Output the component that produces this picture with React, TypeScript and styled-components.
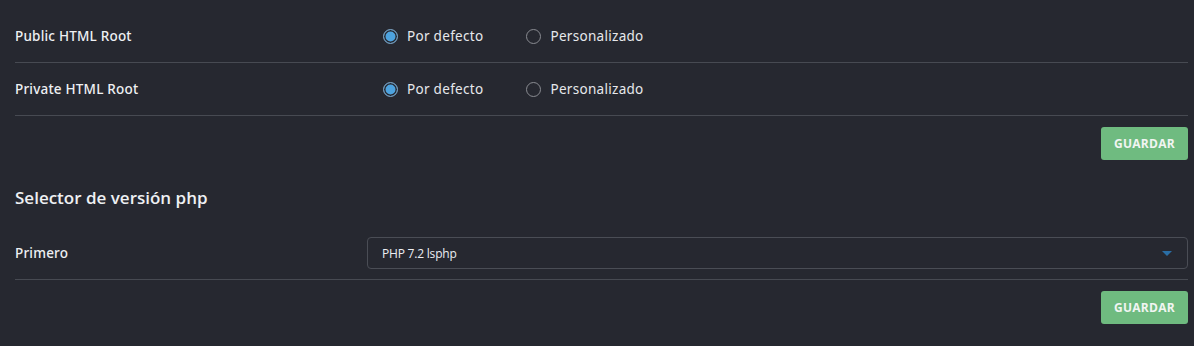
import styled, { createGlobalStyle } from 'styled-components'

const GlobalStyle = createGlobalStyle`
  html, body {
    margin: 0;
    padding: 0;
    background: #262830;
  }
  body {
    font-family: 'Open Sans', 'Liberation Sans', sans-serif;
    color: #eceef2;
  }
`

const Page = styled.div`
  padding: 10px 6px 24px 15px;
  background: #262830;
  min-height: 346px;
  box-sizing: border-box;
`

const Row = styled.div<{ pad?: number }>`
  display: grid;
  grid-template-columns: 352px 1fr;
  align-items: center;
  min-height: 53px;
  padding: ${(p) => p.pad ?? 0}px 0;
  border-bottom: 1px solid #474a52;
  box-sizing: border-box;
`

const Label = styled.div`
  font-family: 'Noto Sans', 'Open Sans', sans-serif;
  font-size: 13.5px;
  font-weight: 500;
  letter-spacing: 0.2px;
  color: #eef0f3;
`

const Options = styled.div`
  display: flex;
  align-items: center;
  gap: 43px;
  padding-left: 16px;
`

const Option = styled.label`
  display: flex;
  align-items: center;
  gap: 9px;
  font-family: 'Noto Sans', 'Open Sans', sans-serif;
  font-size: 13.5px;
  letter-spacing: 0.3px;
  color: #e6e8ec;
  cursor: pointer;
`

const Radio = styled.span<{ checked?: boolean }>`
  width: 15px;
  height: 15px;
  border-radius: 50%;
  box-sizing: border-box;
  border: 1px solid ${(p) => (p.checked ? '#7d9fbb' : '#8a8c92')};
  background: ${(p) => (p.checked ? '#4da3df' : 'transparent')};
  box-shadow: ${(p) => (p.checked ? 'inset 0 0 0 1.5px #262830' : 'none')};
`

const Actions = styled.div`
  display: flex;
  justify-content: flex-end;
  padding-top: 11px;
`

const SaveButton = styled.button`
  width: 87px;
  height: 33px;
  border: none;
  border-radius: 3px;
  background: #6fbb80;
  color: #f1f5f2;
  font-family: 'Open Sans', sans-serif;
  font-weight: 700;
  font-size: 12px;
  letter-spacing: 0.3px;
  cursor: pointer;
`

const Heading = styled.h2`
  margin: 25px 0 16px;
  font-size: 17px;
  line-height: 26px;
  font-weight: 600;
  color: #eef0f3;
`

const Select = styled.div`
  display: flex;
  align-items: center;
  justify-content: space-between;
  height: 32px;
  padding: 0 14px;
  border: 1px solid #4a4d55;
  border-radius: 4px;
  box-sizing: border-box;
  font-size: 12px;
  letter-spacing: -0.2px;
  color: #eceef2;
`

const Caret = styled.span`
  width: 0;
  height: 0;
  border-left: 5px solid transparent;
  border-right: 5px solid transparent;
  border-top: 5px solid #2a6ea5;
  margin-right: 1px;
`

const RadioGroup = ({ value }: { value: string }) => (
  <Options>
    {['Por defecto', 'Personalizado'].map((o) => (
      <Option key={o}>
        <Radio checked={o === value} />
        {o}
      </Option>
    ))}
  </Options>
)

export default function App() {
  return (
    <>
      <GlobalStyle />
      <Page>
        <Row>
          <Label>Public HTML Root</Label>
          <RadioGroup value="Por defecto" />
        </Row>
        <Row>
          <Label>Private HTML Root</Label>
          <RadioGroup value="Por defecto" />
        </Row>
        <Actions>
          <SaveButton>GUARDAR</SaveButton>
        </Actions>
        <Heading>Selector de versión php</Heading>
        <Row pad={10}>
          <Label>Primero</Label>
          <Select>
            <span>PHP 7.2 lsphp</span>
            <Caret />
          </Select>
        </Row>
        <Actions>
          <SaveButton>GUARDAR</SaveButton>
        </Actions>
      </Page>
    </>
  )
}
